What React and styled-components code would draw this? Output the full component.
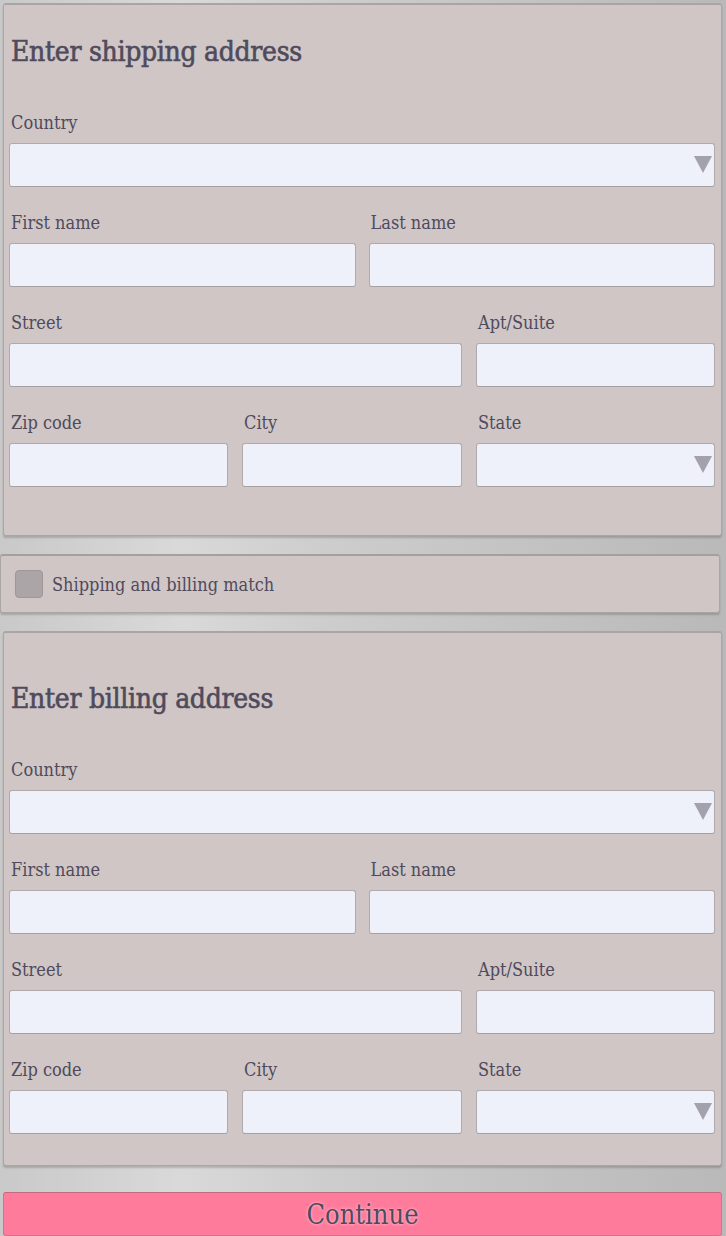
import React from 'react'
import styled, { createGlobalStyle } from 'styled-components';

const GlobalStyle = createGlobalStyle`
  body {
    margin: 0;
    background: linear-gradient(90deg, #c9c9c9 0%, #d9d9d9 25%, #cdcdcd 45%, #c4c4c4 70%, #b9b9b9 100%);
    font-family: "DejaVu Serif", "Liberation Serif", serif;
    font-stretch: condensed;
    color: #4f4a5c;
  }
`;

const Page = styled.div`
  display: flex;
  flex-direction: column;
  padding: 3px 4px 0 3px;
  width: 726px;
  box-sizing: border-box;
`;

const Panel = styled.section`
  background: #cfc6c5;
  border: 1px solid #aba6a6;
  border-top: 2px solid #a9a4a5;
  border-radius: 3px;
  box-shadow: 0 2px 2px rgba(0, 0, 0, 0.18);
  padding: ${p => p.top}px 6px ${p => p.bottom}px 5px;
  margin-bottom: 18px;
`;

const Heading = styled.h2`
  margin: 0 0 40px;
  font-size: 28px;
  line-height: 38px;
  font-weight: normal;
  -webkit-text-stroke: 0.6px #4f4a5c;
  letter-spacing: -0.3px;
  padding-left: 2px;
`;

const Grid = styled.div`
  display: grid;
  grid-template-columns: ${p => p.cols};
  column-gap: ${p => p.gap || 13}px;
  margin-top: ${p => p.first ? 0 : 24}px;
`;

const Field = styled.label`
  display: flex;
  flex-direction: column;
  gap: 8px;
  grid-column: span ${p => p.span || 1};
  min-width: 0;
`;

const Label = styled.span`
  font-size: 18px;
  line-height: 24px;
  padding-left: 2px;
`;

const Input = styled.input`
  box-sizing: border-box;
  width: 100%;
  height: 44px;
  background: #eef0fa;
  border: 1px solid #b0aaac;
  border-bottom-color: #a5a0a2;
  border-radius: 3px;
  font: inherit;
  font-size: 18px;
  outline: none;
`;

const SelectBox = styled.div`
  position: relative;
  box-sizing: border-box;
  height: 44px;
  background: #eef0fa;
  border: 1px solid #b0aaac;
  border-bottom-color: #a5a0a2;
  border-radius: 3px;

  &::after {
    content: '';
    position: absolute;
    right: 2px;
    top: 12px;
    border-left: 9px solid transparent;
    border-right: 9px solid transparent;
    border-top: 17px solid #a3a1ab;
  }
`;

const MatchBar = styled.div`
  display: flex;
  align-items: center;
  gap: 9px;
  height: 59px;
  box-sizing: border-box;
  margin: 0 2px 18px -3px;
  padding: 0 14px;
  background: #cfc6c5;
  border: 1px solid #aba6a6;
  border-top: 2px solid #a3a0a0;
  border-radius: 3px;
  box-shadow: 0 2px 2px rgba(0, 0, 0, 0.18);
  font-size: 18px;
`;

const Check = styled.span`
  width: 28px;
  height: 28px;
  box-sizing: border-box;
  background: #aca5a8;
  border: 1px solid #9d9799;
  border-radius: 4px;
`;

const ContinueButton = styled.button`
  margin-top: 8px;
  height: 44px;
  background: #ff7b9c;
  border: 1px solid #d5728a;
  border-top-color: #c6697f;
  border-radius: 3px;
  font-family: "DejaVu Serif", "Liberation Serif", serif;
  font-stretch: condensed;
  font-size: 27px;
  color: #4f4a5c;
  text-shadow: 0 0 3px rgba(255, 255, 255, 0.7);
  padding: 0;
`;

const AddressForm = ({ title, top, bottom }) => (
  <Panel top={top} bottom={bottom}>
    <Heading>{title}</Heading>
    <Grid cols="1fr" first>
      <Field>
        <Label>Country</Label>
        <SelectBox />
      </Field>
    </Grid>
    <Grid cols="1fr 1fr">
      <Field>
        <Label>First name</Label>
        <Input />
      </Field>
      <Field>
        <Label>Last name</Label>
        <Input />
      </Field>
    </Grid>
    <Grid cols="219px 220px 1fr" gap={14}>
      <Field span={2}>
        <Label>Street</Label>
        <Input />
      </Field>
      <Field>
        <Label>Apt/Suite</Label>
        <Input />
      </Field>
    </Grid>
    <Grid cols="219px 220px 1fr" gap={14}>
      <Field>
        <Label>Zip code</Label>
        <Input />
      </Field>
      <Field>
        <Label>City</Label>
        <Input />
      </Field>
      <Field>
        <Label>State</Label>
        <SelectBox />
      </Field>
    </Grid>
  </Panel>
)

const App = () => {
  return (
    <>
      <GlobalStyle />
      <Page>
        <AddressForm title="Enter shipping address" top={28} bottom={48} />
        <MatchBar>
          <Check />
          <span>Shipping and billing match</span>
        </MatchBar>
        <AddressForm title="Enter billing address" top={47} bottom={31} />
        <ContinueButton>Continue</ContinueButton>
      </Page>
    </>
  )
}

export default App
